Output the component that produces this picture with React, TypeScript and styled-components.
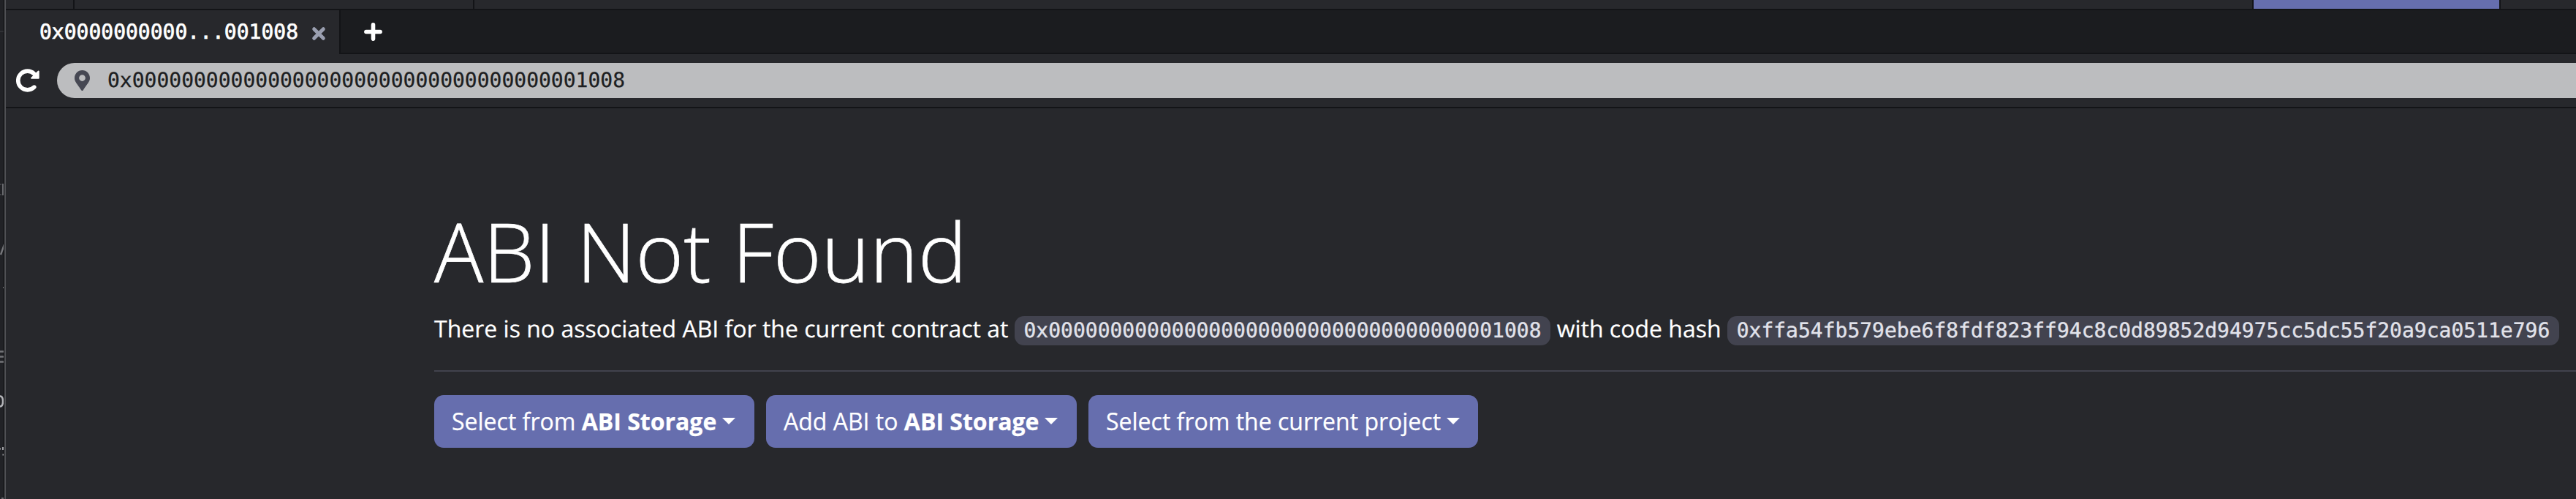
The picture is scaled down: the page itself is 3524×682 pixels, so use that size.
import React from "react";
import styled, { createGlobalStyle } from "styled-components";
import { FaMapMarkerAlt } from "react-icons/fa";

const c = {
  bg: "#27282c",
  dark: "#1b1c1f",
  line: "#131417",
  primary: "#666eae",
  code: "#42434f",
};
const mono = '"DejaVu Sans Mono", monospace';

const Global = createGlobalStyle`
  * { box-sizing: border-box; }
  body {
    margin: 0; overflow: hidden; background: ${c.bg}; color: #fff;
    font-family: "Open Sans", sans-serif; text-rendering: geometricPrecision;
  }
`;
const Window = styled.div`display: flex; width: 100vw; height: 682px; overflow: hidden;`;
const Sidebar = styled.aside`
  flex: none; width: 8px; height: 682px; overflow: hidden;
  background: #212226; border-right: 2px solid #505155;
  box-shadow: inset -1px 0 #08080a;
`;
const SidebarEdge = styled.svg`display: block; width: 5px; height: 682px;`;
const Main = styled.main`flex: 1; min-width: 0; display: flex; flex-direction: column;`;
const Nav = styled.nav`display: flex; height: 14px; border-bottom: 2px solid ${c.line};`;
const NavCell = styled.div<{ $w?: number; $active?: boolean }>`
  ${(p) => (p.$w ? `flex: none; width: ${p.$w}px;` : "flex: 1;")}
  background: ${(p) => (p.$active ? c.primary : c.bg)};
  & + & { border-left: 2px solid ${c.line}; }
`;
const Tabs = styled.div`display: flex; height: 60px; background: ${c.dark};`;
const Tab = styled.div`
  display: flex; align-items: center; flex: none; width: 458px; height: 60px;
  padding-left: 46px; background: ${c.bg}; border-right: 2px solid ${c.line};
`;
const TabTitle = styled.span`
  font: 28px/40px ${mono}; -webkit-text-stroke: 0.7px #fff; white-space: nowrap; margin-top: -1px;
`;
const TabRest = styled.div`
  flex: 1; display: flex; align-items: center; border-bottom: 2px solid ${c.line}; padding-left: 31px;
`;
const CloseIcon = styled.svg`flex: none; width: 20px; height: 20px; margin: 4px 0 0 18px;`;
const PlusIcon = styled.svg`width: 27px; height: 27px; margin-top: 1px;`;
const Toolbar = styled.div`
  display: flex; align-items: center; height: 74px; border-bottom: 2px solid ${c.line};
`;
const ReloadIcon = styled.svg`flex: none; width: 32px; height: 32px; margin: 0 24px 0 14px;`;
const Address = styled.div`
  flex: 1; display: flex; align-items: center; height: 48px; padding-left: 24px;
  background: #bcbdbf; border-radius: 24px 0 0 24px; color: #1d1e21;
  font: 28px/40px ${mono}; -webkit-text-stroke: 0.3px #1d1e21;
`;
const PinIcon = styled(FaMapMarkerAlt)`
  flex: none; width: 21px; height: 28px; margin-right: 24px; color: #464853; stroke: none;
`;
const Content = styled.section`padding: 128px 0 0 586px; white-space: nowrap;`;
const Title = styled.h1`
  margin: 0; font-size: 112px; line-height: 134px; font-weight: 300; -webkit-text-stroke: 0.7px #fff;
`;
const Lead = styled.p`
  height: 48px; margin: 16px 0 0; font-size: 32px; line-height: 48px; -webkit-text-stroke: 0.25px #fff;
`;
const Code = styled.code`
  font: 28px/1 ${mono}; padding: 3px 12.8px 4px; border-radius: 12.8px;
  background: ${c.code}; color: #e1e2ea; -webkit-text-stroke: 0.4px #e1e2ea;
`;
const Rule = styled.hr`margin: 32px 0; border: 0; height: 2px; background: #41424d;`;
const Actions = styled.div`display: flex; gap: 16px;`;
const Button = styled.button<{ $w: number }>`
  display: flex; align-items: center; width: ${(p) => p.$w}px; height: 72px; padding: 0 0 0 24px;
  border: 0; border-radius: 12.8px; background: ${c.primary}; color: #fff;
  font: 32px/48px "Open Sans", sans-serif; white-space: pre; -webkit-text-stroke: 0.25px #fff;
`;
const Caret = styled.span`
  border: 9.6px solid transparent; border-top-color: #fff; border-bottom: 0; margin: -1px 0 0 8px;
`;

export default function App() {
  return (
    <Window>
      <Global />
      <Sidebar>
        <SidebarEdge viewBox="0 0 5 682" fill="none">
          <path d="M0 43h5" stroke="#303135" strokeWidth="2" />
          <path d="M4 251v16" stroke="#6b6c70" strokeWidth="2" />
          <path d="M0 252h2M0 266h2" stroke="#404145" strokeWidth="2" />
          <path d="M1 348l5-14" stroke="#77787c" strokeWidth="2.4" />
          <path d="M4 393h1" stroke="#77787c" strokeWidth="2" />
          <path d="M0 480.5h5M0 487.5h5M0 494.5h5" stroke="#737478" strokeWidth="2.7" />
          <path d="M0 541.5q4 0 4 7t-4 7" stroke="#b5b6ba" strokeWidth="2.5" />
          <path d="M0 613.5h1M4 611v4M3.5 621.5h1.5" stroke="#a5a6aa" strokeWidth="2" />
          <path d="M2 681h3" stroke="#6b6c70" strokeWidth="2" />
        </SidebarEdge>
      </Sidebar>
      <Main>
        <Nav>
          <NavCell $w={92} />
          <NavCell $w={547} />
          <NavCell />
          <NavCell $w={338} $active />
          <NavCell $w={105} />
        </Nav>
        <Tabs>
          <Tab>
            <TabTitle>0x0000000000...001008</TabTitle>
            <CloseIcon viewBox="0 0 20 20" fill="none">
              <path d="M3.7 3.7l12.600 12.600M16.300 3.700L3.700 16.300" stroke="#9a9fb0" strokeWidth="5" strokeLinecap="round" />
            </CloseIcon>
          </Tab>
          <TabRest>
            <PlusIcon viewBox="0 0 27 27" fill="none">
              <path d="M13.5 3.900v19.200M3.900 13.500h19.200" stroke="#fff" strokeWidth="5.600" strokeLinecap="round" />
            </PlusIcon>
          </TabRest>
        </Tabs>
        <Toolbar>
          <ReloadIcon viewBox="0 0 32 32" fill="none">
            <path d="M24.800 25.100A12.900 12.900 0 1 1 24.800 6.900L26.500 8.600" stroke="#fff" strokeWidth="5.600" strokeLinecap="round" />
            <path d="M30.700 3.600v9.100h-9.600z" fill="#fff" stroke="#fff" strokeWidth="2" strokeLinejoin="round" />
          </ReloadIcon>
          <Address>
            <PinIcon />
            0x0000000000000000000000000000000000001008
          </Address>
        </Toolbar>
        <Content>
          <Title>ABI Not Found</Title>
          <Lead>
            There is no associated ABI for the current contract at{" "}
            <Code>0x0000000000000000000000000000000000001008</Code> with code hash{" "}
            <Code>0xffa54fb579ebe6f8fdf823ff94c8c0d89852d94975cc5dc55f20a9ca0511e796</Code>
          </Lead>
          <Rule />
          <Actions>
            <Button $w={438}>Select from <b>ABI Storage</b><Caret /></Button>
            <Button $w={425}>Add ABI to <b>ABI Storage</b><Caret /></Button>
            <Button $w={533}>Select from the current project<Caret /></Button>
          </Actions>
        </Content>
      </Main>
    </Window>
  );
}
